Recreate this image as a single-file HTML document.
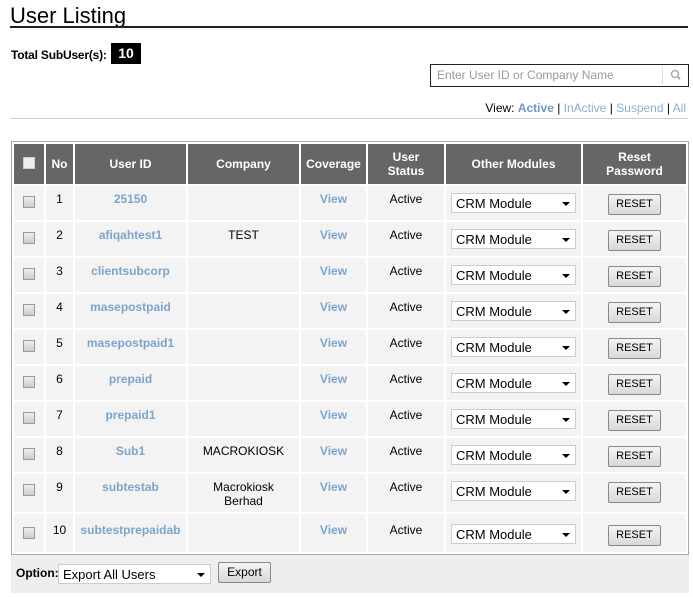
<!DOCTYPE html>
<html><head><style>
*{box-sizing:border-box}
body{margin:0;width:693px;height:597px;background:#fff;font-family:"Liberation Sans",Arial,sans-serif;font-size:12px;color:#000;position:relative;overflow:hidden}
.a{position:absolute}
h1{position:absolute;left:10px;top:3px;margin:0;font-weight:normal;font-size:22px}
.rule{left:10px;top:26px;width:678px;height:2px;background:#222}
.tot{left:11px;top:48px;font-weight:bold;letter-spacing:-0.2px}
.cnt{left:111px;top:43px;width:30px;height:21px;background:#000;color:#fff;font-weight:bold;font-size:14px;text-align:center;line-height:21px}
.search{left:430px;top:64px;width:259px;height:23px;border:1px solid #222;color:#999;padding:3px 6px}
.search .ic{position:absolute;right:0;top:2px;width:26px;height:17px;border-left:1px solid #ddd}
.view{right:7px;top:101px}
.view a{color:#88aed0;text-decoration:none}
.view b{color:#6a9ac6}
.gl{left:10px;top:118px;width:678px;height:1px;background:#ccc}
table{position:absolute;left:11px;top:141px;border:1px solid #aaa;border-spacing:2px;width:678px;table-layout:fixed}
th{background:#666;color:#fff;font-weight:bold;height:40px;padding:0;text-align:center}
td{background:#f3f3f3;height:34px;text-align:center;vertical-align:top;padding:6px 0 0}
td.l{color:#7ba5cc;font-weight:bold}
.cb{display:inline-block;width:12px;height:12px;border:1px solid #999;background:linear-gradient(#eee,#ccc);margin-top:4px}
th .cb{background:#eee;border-color:#ccc;margin-top:0}
.sel{display:inline-block;width:125px;height:20px;border:1px solid #ccc;background:#fff;text-align:left;padding:2px 4px;font-size:13px;position:relative;margin-top:1px}
.sel:after{content:"";position:absolute;right:5px;top:8px;border:4px solid transparent;border-top:4px solid #000;border-bottom:0}
.btn{display:inline-block;width:53px;height:21px;border:1px solid #888;border-radius:2px;background:linear-gradient(#f4f4f4,#d8d8d8);font-size:11px;line-height:19px;text-align:center;margin-top:2px}
.foot{left:11px;top:555px;width:678px;height:38px;background:#eee}
</style></head><body>
<h1>User Listing</h1>
<div class="a rule"></div>
<div class="a tot">Total SubUser(s):</div>
<div class="a cnt">10</div>
<div class="a search">Enter User ID or Company Name<span class="ic"><svg width="26" height="17"><circle cx="12" cy="7" r="3.5" fill="none" stroke="#aaa" stroke-width="1.5"/><line x1="14.5" y1="9.5" x2="17" y2="12" stroke="#aaa" stroke-width="2"/></svg></span></div>
<div class="a view">View: <b>Active</b> | <a>InActive</a> | <a>Suspend</a> | <a>All</a></div>
<div class="a gl"></div>
<table>
<colgroup><col style="width:30px"><col style="width:27px"><col style="width:111px"><col style="width:111px"><col style="width:65px"><col style="width:76px"><col style="width:135px"><col style="width:103px"></colgroup>
<tr><th><span class="cb"></span></th><th>No</th><th>User ID</th><th>Company</th><th>Coverage</th><th>User<br>Status</th><th>Other Modules</th><th>Reset<br>Password</th></tr>
<tr><td><span class="cb"></span></td><td>1</td><td class="l">25150</td><td></td><td class="l">View</td><td>Active</td><td><span class="sel">CRM Module</span></td><td><span class="btn">RESET</span></td></tr>
<tr><td><span class="cb"></span></td><td>2</td><td class="l">afiqahtest1</td><td>TEST</td><td class="l">View</td><td>Active</td><td><span class="sel">CRM Module</span></td><td><span class="btn">RESET</span></td></tr>
<tr><td><span class="cb"></span></td><td>3</td><td class="l">clientsubcorp</td><td></td><td class="l">View</td><td>Active</td><td><span class="sel">CRM Module</span></td><td><span class="btn">RESET</span></td></tr>
<tr><td><span class="cb"></span></td><td>4</td><td class="l">masepostpaid</td><td></td><td class="l">View</td><td>Active</td><td><span class="sel">CRM Module</span></td><td><span class="btn">RESET</span></td></tr>
<tr><td><span class="cb"></span></td><td>5</td><td class="l">masepostpaid1</td><td></td><td class="l">View</td><td>Active</td><td><span class="sel">CRM Module</span></td><td><span class="btn">RESET</span></td></tr>
<tr><td><span class="cb"></span></td><td>6</td><td class="l">prepaid</td><td></td><td class="l">View</td><td>Active</td><td><span class="sel">CRM Module</span></td><td><span class="btn">RESET</span></td></tr>
<tr><td><span class="cb"></span></td><td>7</td><td class="l">prepaid1</td><td></td><td class="l">View</td><td>Active</td><td><span class="sel">CRM Module</span></td><td><span class="btn">RESET</span></td></tr>
<tr><td><span class="cb"></span></td><td>8</td><td class="l">Sub1</td><td>MACROKIOSK</td><td class="l">View</td><td>Active</td><td><span class="sel">CRM Module</span></td><td><span class="btn">RESET</span></td></tr>
<tr><td style="height:38px"><span class="cb"></span></td><td>9</td><td class="l">subtestab</td><td>Macrokiosk<br>Berhad</td><td class="l">View</td><td>Active</td><td><span class="sel">CRM Module</span></td><td><span class="btn">RESET</span></td></tr>
<tr><td style="height:38px;padding-top:9px"><span class="cb"></span></td><td style="padding-top:9px">10</td><td class="l" style="padding-top:9px">subtestprepaidab</td><td></td><td class="l" style="padding-top:9px">View</td><td style="padding-top:9px">Active</td><td style="padding-top:9px"><span class="sel">CRM Module</span></td><td style="padding-top:9px"><span class="btn">RESET</span></td></tr>
</table>
<div class="a foot">
<span class="a" style="left:5px;top:11px;font-weight:bold">Option:</span>
<span class="a sel" style="left:47px;top:8px;width:153px">Export All Users</span>
<span class="a btn" style="left:207px;top:7px;font-size:12px;margin:0">Export</span>
</div>
</body></html>
